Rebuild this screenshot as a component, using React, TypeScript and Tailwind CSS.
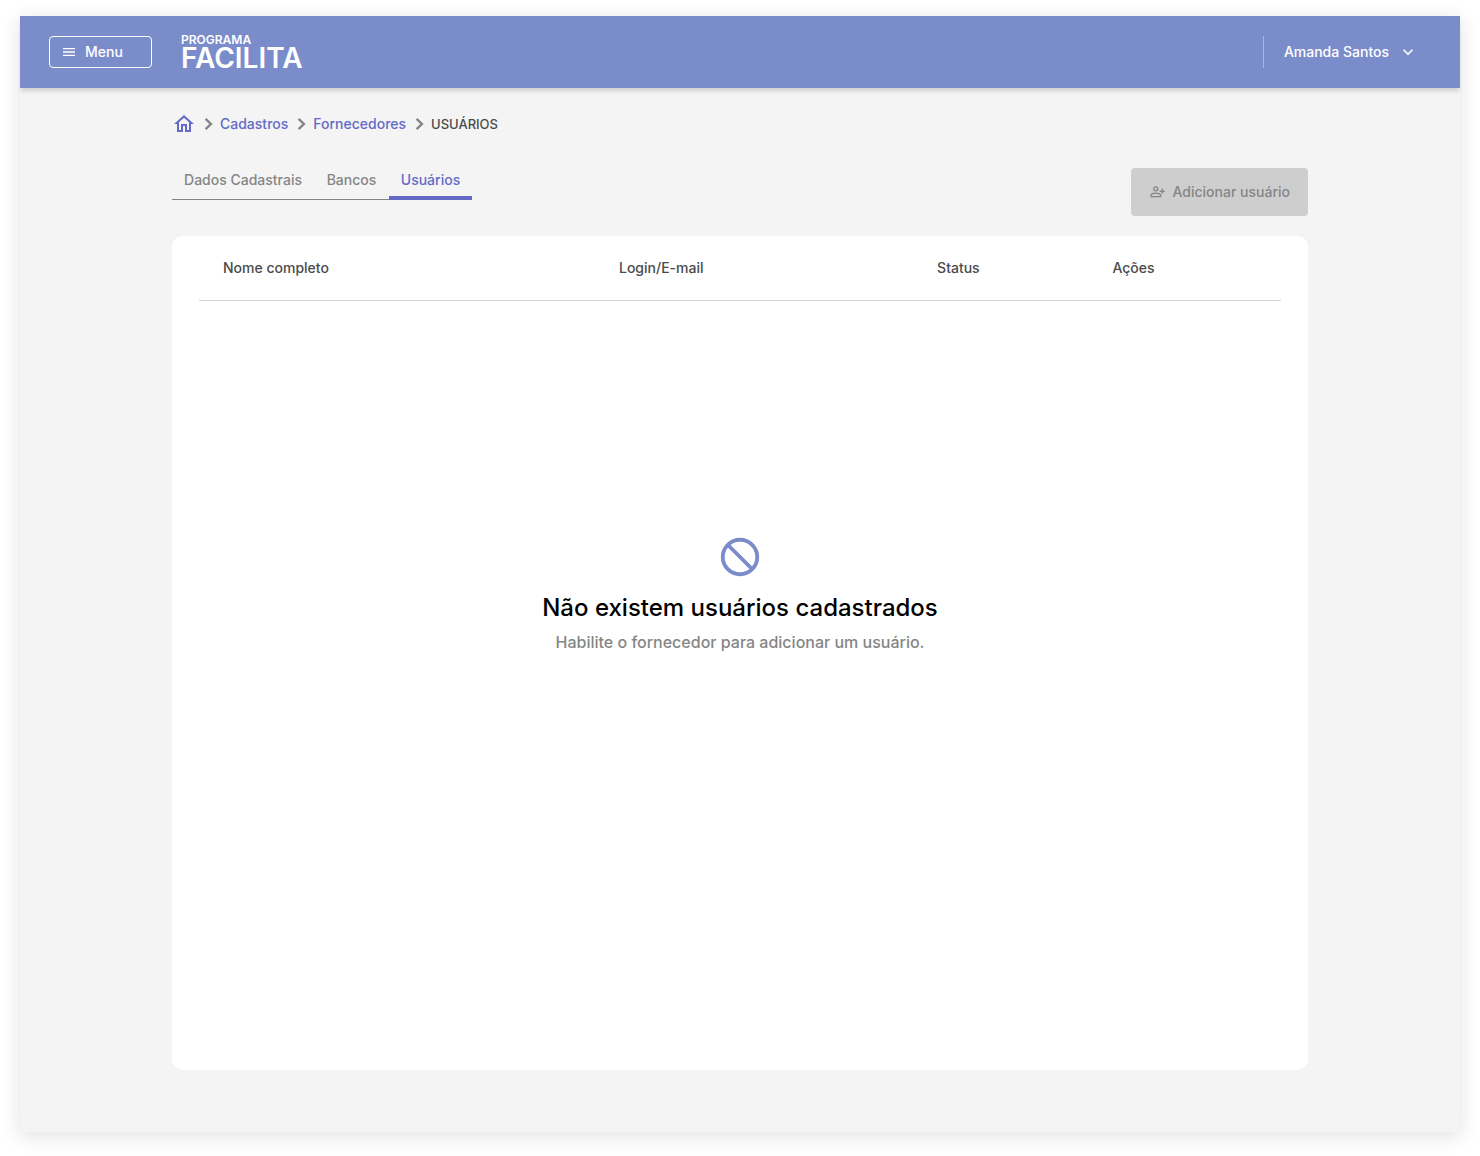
import { MdKeyboardArrowDown, MdMenu, MdOutlineHome } from "react-icons/md";

const parents = ["Cadastros", "Fornecedores"];

const tabs = [
  { label: "Dados Cadastrais", width: "w-[142px]", active: false },
  { label: "Bancos", width: "w-[75px]", active: false },
  { label: "Usuários", width: "w-[83px]", active: true },
];

const columns = [
  { label: "Nome completo", width: "w-[36.6%]" },
  { label: "Login/E-mail", width: "w-[29.4%]" },
  { label: "Status", width: "w-[16.2%]" },
  { label: "Ações", width: "w-[17.8%]" },
];

function EmptyIcon() {
  return (
    <svg
      width="46"
      height="46"
      viewBox="0 0 24 24"
      fill="none"
      stroke="currentColor"
      strokeWidth="2"
      className="text-[#7b8ccb]"
      aria-hidden="true"
    >
      <circle cx="12" cy="12" r="9" />
      <path d="M5.6 5.6l12.8 12.8" />
    </svg>
  );
}

function Separator() {
  return (
    <svg
      width="24"
      height="24"
      viewBox="0 0 24 24"
      fill="none"
      stroke="#858585"
      strokeWidth="2.4"
      aria-hidden="true"
    >
      <path d="M9.6 6.8l5.3 5.2-5.3 5.2" />
    </svg>
  );
}

function AddUserIcon() {
  return (
    <svg
      width="16"
      height="16"
      viewBox="0 0 16 16"
      fill="none"
      stroke="currentColor"
      strokeWidth="1.3"
      aria-hidden="true"
    >
      <circle cx="6.8" cy="4.8" r="2" />
      <path d="M2 12.7v-1.2c0-1.6 2.8-2.4 4.8-2.4s4.8.8 4.8 2.4v1.2z" />
      <path d="M13.2 4.7v5.2M10.6 7.3h5.2" />
    </svg>
  );
}

function Header() {
  return (
    <header className="relative flex h-[72px] items-center bg-[#7b8ccb] pl-[29px] pr-[42px] text-white shadow-[0_4px_4px_-1px_rgba(0,0,0,0.15)]">
      <button
        type="button"
        className="flex h-8 w-[103px] items-center gap-2 rounded border border-white px-[11px] text-sm font-medium"
      >
        <MdMenu size={16} aria-hidden="true" />
        Menu
      </button>
      <a href="#inicio" className="ml-[29px] flex flex-col pt-0.5 font-semibold">
        <span className="text-[12px] leading-[10px]">PROGRAMA</span>
        <span className="text-[28px] leading-[26px]">FACILITA</span>
      </a>
      <div className="ml-auto flex h-8 items-center border-l border-[#a9b6e4] pl-5">
        <button type="button" className="flex items-center gap-[9px] text-sm font-medium">
          Amanda Santos
          <MdKeyboardArrowDown size={20} aria-hidden="true" />
        </button>
      </div>
    </header>
  );
}

function Breadcrumb() {
  return (
    <nav aria-label="Trilha" className="flex h-6 items-center text-sm font-medium">
      <a href="#inicio" aria-label="Início" className="text-[#636bc6]">
        <MdOutlineHome size={24} />
      </a>
      {parents.map((item) => (
        <span key={item} className="flex items-center pr-px">
          <Separator />
          <a href={"#" + item.toLowerCase()} className="text-[#636bc6]">
            {item}
          </a>
        </span>
      ))}
      <Separator />
      <span aria-current="page" className="text-[13px] text-[#4a4a4a]">
        USUÁRIOS
      </span>
    </nav>
  );
}

function Tabs() {
  return (
    <div role="tablist" className="flex h-8 text-sm font-medium">
      {tabs.map((tab) => (
        <button
          key={tab.label}
          type="button"
          role="tab"
          aria-selected={tab.active}
          className={
            "flex items-start justify-center whitespace-nowrap pt-0.5 " +
            tab.width +
            (tab.active
              ? " border-b-4 border-[#636bc6] text-[#636bc6]"
              : " border-b border-[#858585] text-[#858585]")
          }
        >
          {tab.label}
        </button>
      ))}
    </div>
  );
}

export default function App() {
  return (
    <div className="bg-white px-5 pb-6 pt-4 font-['Inter',sans-serif]">
      <div className="flex min-h-[calc(100vh-40px)] flex-col bg-[#f4f4f4] pb-[62px] shadow-[0_4px_20px_rgba(0,0,0,0.12)]">
        <Header />
        <main className="mx-auto flex w-full max-w-[1136px] grow flex-col pt-6">
          <Breadcrumb />
          <div className="mt-8 flex items-start justify-between">
            <Tabs />
            <button
              type="button"
              disabled
              className="flex h-12 items-center gap-2 rounded bg-[#cecece] px-[18px] text-sm font-medium text-[#858585]"
            >
              <AddUserIcon />
              Adicionar usuário
            </button>
          </div>
          <section className="mt-5 flex grow flex-col rounded-[10px] bg-white px-[27px]">
            <table className="w-full table-fixed">
              <thead>
                <tr className="h-16 border-b border-[#d4d4d4] text-left text-sm text-[#4a4a4a]">
                  {columns.map((column) => (
                    <th key={column.label} scope="col" className={"px-6 font-medium " + column.width}>
                      {column.label}
                    </th>
                  ))}
                </tr>
              </thead>
            </table>
            <div className="flex grow flex-col items-center justify-center pb-[182px] text-center">
              <EmptyIcon />
              <h1 className="mt-3 text-2xl font-medium leading-8 text-black">
                Não existem usuários cadastrados
              </h1>
              <p className="mt-1.5 text-base font-medium text-[#858585]">
                Habilite o fornecedor para adicionar um usuário.
              </p>
            </div>
          </section>
        </main>
      </div>
    </div>
  );
}
